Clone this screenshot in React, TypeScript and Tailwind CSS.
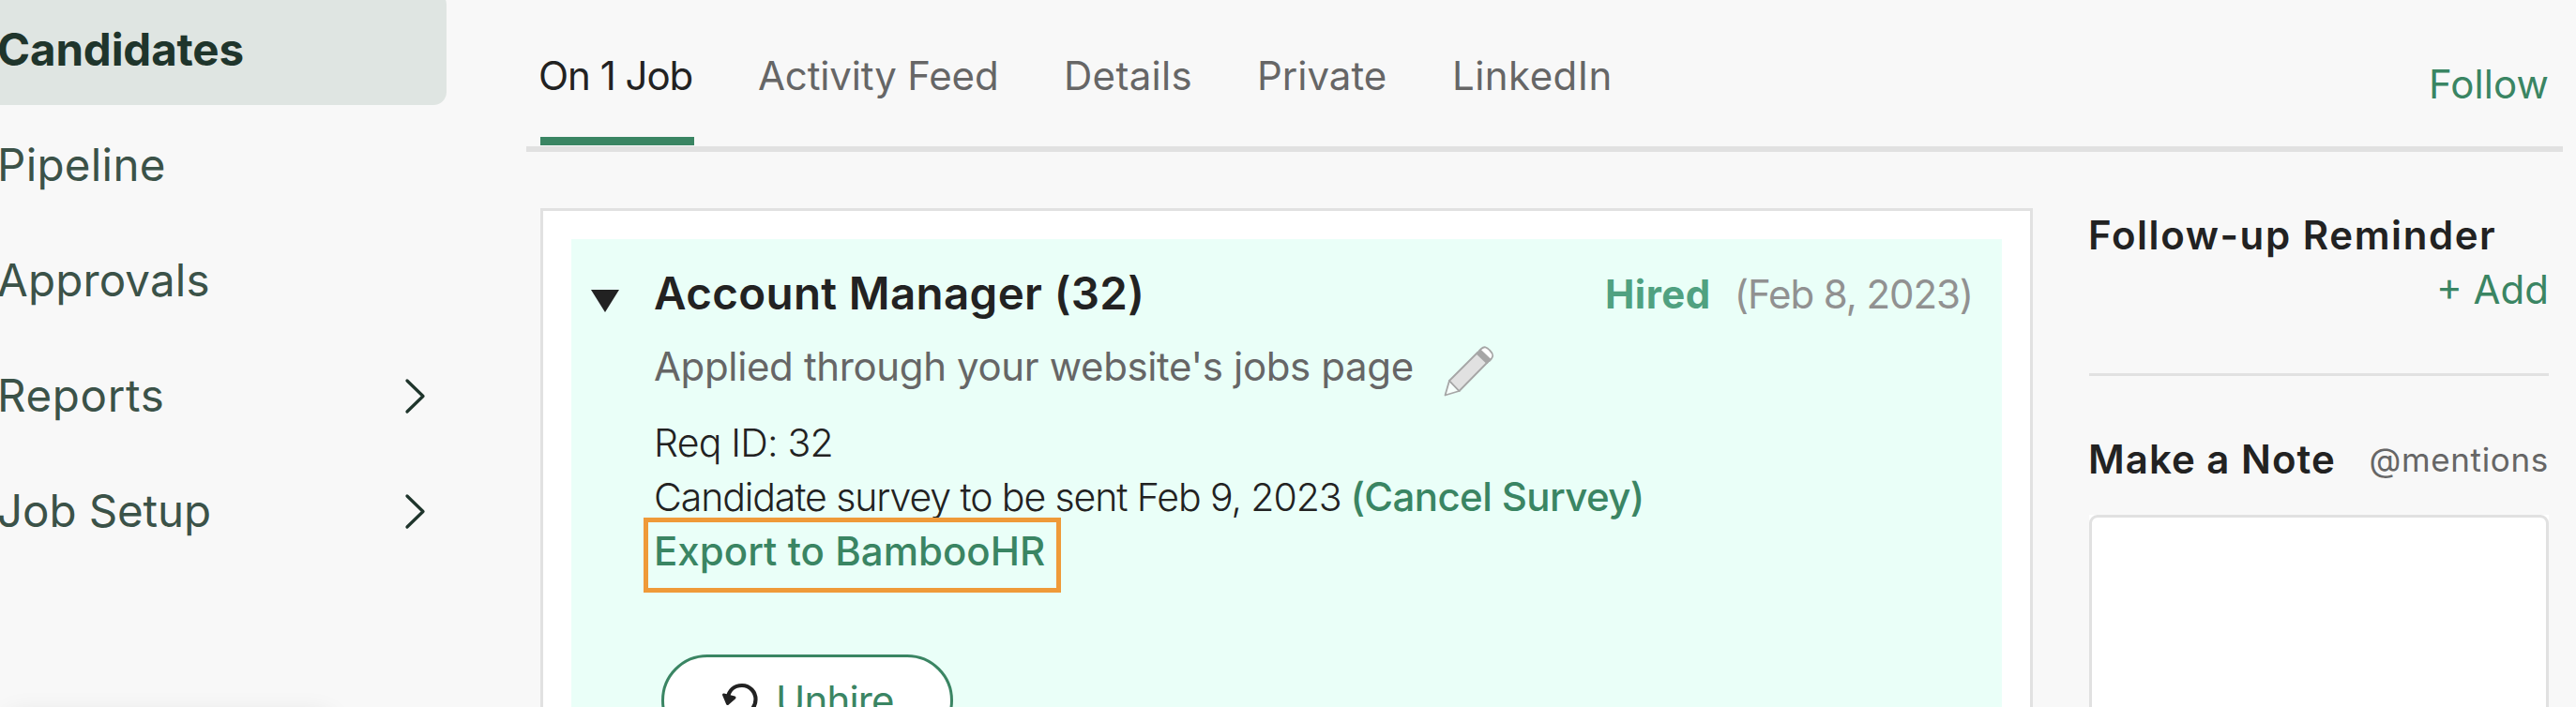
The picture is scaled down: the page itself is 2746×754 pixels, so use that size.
import clsx from "clsx";

const navItems = [
  { label: "Candidates", active: true, className: "tracking-[-0.15px]" },
  { label: "Pipeline", className: "tracking-[0.3px]" },
  { label: "Approvals", className: "tracking-[0.15px]" },
  { label: "Reports", expandable: true, className: "tracking-[0.65px]" },
  { label: "Job Setup", expandable: true, className: "tracking-[-0.1px]" },
];

const tabs = [
  { label: "On 1 Job", active: true, className: "w-[164px] tracking-[-1.03px]" },
  { label: "Activity Feed", className: "w-[258px] tracking-[-0.15px]" },
  { label: "Details", className: "w-[138px] tracking-[0.3px]" },
  { label: "Private", className: "w-[140px]" },
  { label: "LinkedIn", className: "tracking-[0.45px]" },
];

function ChevronIcon() {
  return (
    <svg width="24" height="40" viewBox="0 0 24 40" fill="none" stroke="#1f352c" strokeWidth="3.300" strokeLinecap="round" strokeLinejoin="round">
      <path d="M4 4L21 20.500L4 37" />
    </svg>
  );
}

function PencilIcon() {
  return (
    <svg className="mt-[7px] ml-[31px] shrink-0" width="56" height="56" viewBox="0 0 56 56" stroke="#a6a6a6" strokeWidth="1.800" strokeLinejoin="round">
      <path d="M2.500 53.500L7 38L17.500 49Z" fill="#fff" fillOpacity="0.600" />
      <path d="M7 38L37.500 7.500L48 18L17.500 49Z" fill="#e1e1e1" />
      <path d="M41 4C44 1 47 2 50 5.500C53.500 9 54.500 12 51.500 15L49.500 17L39 6Z" fill="#fff" />
      <path d="M36.500 9L40 5.500L50.500 15.500L47 19Z" fill="#a6a6a6" />
    </svg>
  );
}

function UndoIcon() {
  return (
    <svg width="40" height="40" viewBox="0 0 40 40" fill="none">
      <path d="M6.500 18C8 9 14 4 22 4C30.500 4 36.500 11 36.500 19C36.500 27.500 30 34 22 34C18 34 14.500 32.500 12 30" stroke="#222" strokeWidth="4.200" strokeLinecap="round" />
      <path d="M2.500 14L6.500 23.500L14 17Z" fill="#222" stroke="#222" strokeWidth="3" strokeLinejoin="round" />
    </svg>
  );
}

function Sidebar() {
  return (
    <aside className="w-[476px] shrink-0">
      <nav className="-mt-[9px] flex flex-col gap-[2px]">
        {navItems.map((item) => (
          <a
            key={item.label}
            className={clsx(
              "flex h-[121px] items-center justify-between rounded-r-[14px] pt-[2px] pr-[22px] text-[47.5px] whitespace-nowrap",
              item.active ? "bg-[#dfe5e2] font-bold text-[#1f352c]" : "text-[#3b5248]",
              item.className,
            )}
          >
            <span className="-ml-[3px]">{item.label}</span>
            {item.expandable && <ChevronIcon />}
          </a>
        ))}
      </nav>
      <div className="mt-[162px] ml-[10px] h-20 w-[340px] shadow-[0_0_30px_rgba(0,0,0,0.14)]" />
    </aside>
  );
}

function TabBar() {
  return (
    <header className="flex h-[162px] w-[2171px] justify-between border-b-[6px] border-[#e1e1e1] px-[15px]">
      <div className="flex h-[155px] gap-[68px]">
        {tabs.map((tab) => (
          <a
            key={tab.label}
            className={clsx(
              "pt-[51px] whitespace-nowrap",
              tab.active ? "border-b-[9px] border-[#3a8563] text-[#222]" : "text-[#666]",
              tab.className,
            )}
          >
            {tab.active ? <span className="-ml-[2px]">{tab.label}</span> : tab.label}
          </a>
        ))}
      </div>
      <a className="pt-[60px] tracking-[0.1px] text-[#3a8563]">Follow</a>
    </header>
  );
}

function JobCard() {
  return (
    <section className="h-[700px] w-[1591px] border-[3px] border-[#e1e1e1] bg-white p-[30px]">
      <div className="flex h-full bg-[#eafff8] pt-[28px] pr-[31px] pl-[21px]">
        <svg className="mt-[26px] mr-[38px] shrink-0" width="30" height="24" viewBox="0 0 30 24">
          <path d="M0 0H30L15 24Z" fill="#222" />
        </svg>
        <div className="-ml-px flex-1">
          <div className="flex justify-between">
            <h2 className="text-[47.5px] font-semibold tracking-[0.35px] text-[#222]">Account Manager (32)</h2>
            <div className="flex gap-[25px] pt-px">
              <span className="font-bold tracking-[0.5px] text-[#50a181]">Hired</span>
              <span className="tracking-[-1.09px] text-[#919191]">(Feb 8, 2023)</span>
            </div>
          </div>
          <div className="mt-[17px] flex h-[60px]">
            <p className="tracking-[-0.36px] text-[#666]">Applied through your website's jobs page</p>
            <PencilIcon />
          </div>
          <div className="mt-[22px] leading-[58px] text-[#3a8563]">
            <p className="text-[41px] font-light tracking-[-0.8px] text-[#222]">Req ID: 32</p>
            <div className="flex gap-[10px]">
              <p className="text-[41px] font-light tracking-[-1.1px] text-[#222]">Candidate survey to be sent Feb 9, 2023</p>
              <a className="font-medium tracking-[-0.6px]">(Cancel Survey)</a>
            </div>
            <div className="relative">
              <a className="font-medium tracking-[0.02px]">Export to BambooHR</a>
              <span className="absolute -top-[7px] -left-[11px] h-[80px] w-[445px] border-[5px] border-[#ef9a39]" />
            </div>
          </div>
          <button className="mt-[81px] ml-[8px] flex h-[98px] w-[311px] items-center gap-[18px] rounded-full border-[3px] border-[#3a8563] bg-white pl-[61px] tracking-[-0.84px] text-[#3a8563]">
            <UndoIcon />
            Unhire
          </button>
        </div>
      </div>
    </section>
  );
}

function NotesPanel() {
  return (
    <aside className="w-[490px] leading-[58px] whitespace-nowrap">
      <h3 className="-ml-px font-semibold tracking-[1.57px] text-[#222]">Follow-up Reminder</h3>
      <a className="block text-right text-[#3a8563]">+ Add</a>
      <hr className="my-[60px] border-t-[3px] border-[#e1e1e1]" />
      <div className="flex justify-between">
        <h3 className="-ml-px font-semibold tracking-[1.02px] text-[#222]">Make a Note</h3>
        <span className="text-[35px] tracking-[0.66px] text-[#666]">@mentions</span>
      </div>
      <div className="mt-[30px] bg-white">
        <div className="h-[300px] rounded-[9px] border-[3px] border-[#e1e1e1]" />
      </div>
    </aside>
  );
}

export default function App() {
  return (
    <div className="flex h-[754px] w-[2746px] overflow-hidden bg-[#f8f8f8] font-['Inter',sans-serif] text-[42px] leading-[60px]">
      <Sidebar />
      <main className="ml-[85px]">
        <TabBar />
        <div className="mt-[60px] ml-[15px] flex gap-[60px]">
          <JobCard />
          <NotesPanel />
        </div>
      </main>
    </div>
  );
}
